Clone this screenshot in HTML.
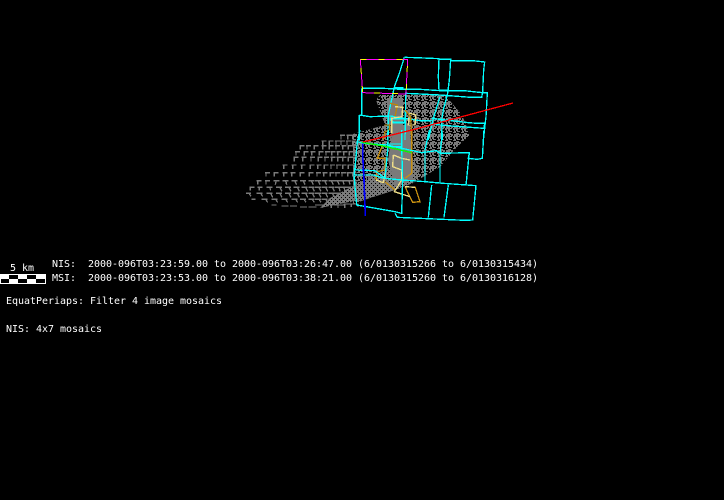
<!DOCTYPE html>
<html><head><meta charset="utf-8"><style>
html,body{margin:0;padding:0;background:#000;width:724px;height:500px;overflow:hidden}
svg{display:block}
text{font-family:"DejaVu Sans Mono","Liberation Mono",monospace;font-size:10px;fill:#fff;white-space:pre;letter-spacing:-.02px}
</style></head><body>
<svg width="724" height="500" viewBox="0 0 724 500" xmlns="http://www.w3.org/2000/svg">
<defs>
<pattern id="b" width="8" height="8" patternUnits="userSpaceOnUse">
<path d="M0 0h4v1h-2v2h2v1h-3v-1h-1zM5 0h3v1h-1v2h1v2h-3v-1h1v-2h-1zM0 5h3v1h2v2h-2v-1h-1v1h-2zM6 6h2v2h-2z" fill="#7a7a7a"/>
</pattern>
<pattern id="d" width="4" height="4" patternUnits="userSpaceOnUse">
<rect width="4" height="4" fill="#7a7a7a"/><rect x="1" y="1" width="1" height="1" fill="#000"/><rect x="3" y="3" width="1" height="1" fill="#000"/>
</pattern>
</defs>
<rect width="724" height="500" fill="#000"/>

<!-- mesh: fan marks -->
<g transform="translate(240 130) scale(.33333)" fill="none" stroke="#7a7a7a" stroke-width="4" shape-rendering="crispEdges">
<path d="M300 16h15m-12 0v12M320 16h15m-12 0v12M335 16h15m-12 0v12M245 33h15m-12 0v12M265 33h15m-12 0v12M285 33h15m-12 0v12M300 33h15m-12 0v12M318 33h15m-12 0v12M335 33h15m-12 0v12M178 47h15m-12 0v12M198 47h15m-12 0v12M220 47h15m-12 0v12M245 47h15m-12 0v12M265 47h15m-12 0v12M285 47h15m-12 0v12M305 47h15m-12 0v12M322 47h15m-12 0v12M338 47h15m-12 0v12M165 65h15m-12 0v12M190 65h15m-12 0v12M212 65h15m-12 0v12M235 65h15m-12 0v12M255 65h15m-12 0v12M272 65h15m-12 0v12M290 65h15m-12 0v12M308 65h15m-12 0v12M325 65h15m-12 0v12M340 65h15m-12 0v12M160 82h15m-12 0v12M185 82h15m-12 0v12M210 82h15m-12 0v12M232 82h15m-12 0v12M252 82h15m-12 0v12M272 82h15m-12 0v12M290 82h15m-12 0v12M305 82h15m-12 0v12M322 82h15m-12 0v12M338 82h15m-12 0v12M128 105h15m-12 0v12M155 105h15m-12 0v12M182 105h15m-12 0v12M208 105h15m-12 0v12M230 105h15m-12 0v12M250 105h15m-12 0v12M270 105h15m-12 0v12M288 105h15m-12 0v12M305 105h15m-12 0v12M322 105h15m-12 0v12M338 105h15m-12 0v12M75 128h15m-12 0v12M100 128h15m-12 0v12M128 128h15m-12 0v12M152 128h15m-12 0v12M178 128h15m-12 0v12M205 128h15m-12 0v12M228 128h15m-12 0v12M248 128h15m-12 0v12M268 128h15m-12 0v12M285 128h15m-12 0v12M303 128h15m-12 0v12M320 128h15m-12 0v12M335 128h15m-12 0v12"/>
<path d="M50 152h15m-12 0v12M75 152h15m-12 0v12M100 152h18m-9 0l-3 12M128 152h18m-9 0l3 12M155 152h18m-9 0l6 12M180 152h18m-9 0l6 12M205 152h18m-9 0l6 12M225 152h18m-9 0l6 12M245 152h18m-9 0l6 12M265 152h18m-9 0l6 12M283 152h18m-9 0l6 12M300 152h18m-9 0l3 12M318 152h18m-9 0l3 12M335 152h18m-9 0l3 12M28 172h15m-12 0v9M52 172h15m-9 0v9M80 172h18m-9 0l3 9M108 172h18m-6 0l6 12M135 172h18m-6 0l6 12M160 172h18m-6 0l6 12M185 172h18m-6 0l6 12M205 172h18m-6 0l6 12M225 172h18m-6 0l6 12M245 172h18m-6 0l6 12M265 172h18m-6 0l6 12M285 172h18m-6 0l3 12M300 172h18m-6 0l3 12M318 172h18m-6 0l3 12M335 172h18m-6 0l3 12M18 190h15m-6 0l6 9M50 190h18m-6 0l6 9M80 190h18m-6 0l6 12M108 190h18m-6 0l6 12M135 190h18m-6 0l6 12M160 190h18m-6 0l6 12M185 190h18m-6 0l6 12M205 190h18m-6 0l6 12M225 190h18m-6 0l6 12M245 190h18m-6 0l6 12M265 190h18m-6 0l6 12M283 190h18m-6 0l3 12M300 190h18m-6 0l3 12M318 190h18m-6 0l3 12M335 190h18m-6 0l3 12M35 208h12M65 208h18m-6 0l6 9M95 208h18m-6 0l6 9M125 208h18m-6 0l6 9M155 208h18m-6 0l6 9M180 208h18m-6 0l6 9M205 208h18m-6 0l6 9M225 208h18m-6 0l6 9M245 208h18m-6 0l6 9M265 208h18m-6 0l6 9M285 208h18m-6 0l3 9M300 208h18m-6 0l3 9M318 208h18m-6 0l3 9M335 208h18m-6 0l3 9M95 225h15M125 228h21M150 228h21M180 231h21M205 231h24M225 225h24v9M250 225h24v9M270 225h24v9M290 225h24v9M310 222h24v9M330 222h24v9"/>
</g>
<!-- mesh: dense part -->
<polygon points="353,134 385,125 376,100 380,95 445,95 462,115 470,135 457,147 440,167 423,177 413,183 395,190 373,197 353,204" fill="url(#b)"/>
<polygon points="320,208 373,197 395,190 413,183 420,170 413,160 385,170 355,185 330,198" fill="url(#d)"/>
<polygon points="393,125 410,125 413,180 395,186 388,160" fill="#7a7a7a"/>
<polygon points="387,98 403,98 403,125 387,125" fill="#7a7a7a"/>

<!-- lines from upper view -->
<g transform="translate(340 50) scale(.33333)" fill="none" stroke-width="4" shape-rendering="crispEdges">
<g stroke="#0ff">
<polyline points="193,22 228,23 297,26 295,80 297,122"/>
<polyline points="193,22 178,70 165,105 160,125 145,195 143,270"/>
<polyline points="297,28 332,28 328,90 323,130 310,180 305,210 307,270"/>
<polyline points="332,32 398,32 434,36 431,60 428,125 425,142 393,142 300,135 240,132 197,130 195,270"/>
<polyline points="65,115 130,115 185,118 240,118 300,122 325,122 372,122 428,128 442,128 438,200 430,270"/>
<polyline points="65,115 65,195"/>
<polyline points="58,195 90,200 150,198 240,212 275,212"/>
<polyline points="58,195 58,270"/>
<polyline points="275,205 385,218 412,220 434,220 432,235 335,228 300,225 270,222"/>
<polyline points="300,140 280,205 265,270"/>
<polyline points="297,120 322,120"/>
<polyline points="160,113 190,113"/>
<polyline points="150,205 195,205 195,218 160,218 150,205" stroke-width="6"/>
</g>
<polygon points="61,28 203,28 198,132 68,128" stroke="#f0f" stroke-width="3"/>
<polygon points="61,28 203,28 198,132 68,128" stroke="#ff0" stroke-width="3" stroke-dasharray="18 36"/>
<polyline points="133,225 150,225 148,240 135,245 130,270" stroke="#b8860b"/>
<polyline points="150,160 172,165 165,200" stroke="#b8860b"/>
<polyline points="165,170 188,172 186,200 155,205 155,250" stroke="#eedd88"/>
<polyline points="208,190 228,195 225,225 205,225 208,190" stroke="#eedd88"/>
<polyline points="195,180 212,200 215,270" stroke="#b8860b"/>
</g>

<!-- lines from lower view -->
<g transform="translate(340 130) scale(.33333)" fill="none" stroke-width="4" shape-rendering="crispEdges">
<g stroke="#c89010">
<polyline points="110,85 135,85 135,120 110,125 108,150"/>
<polyline points="215,0 215,130 195,145"/>
<polyline points="130,40 112,85"/>
<polyline points="135,155 165,180"/>
<polyline points="195,170 218,217 240,215 225,170"/>
</g>
<g stroke="#eedd88">
<polyline points="108,150 130,158 135,130"/>
<polyline points="160,75 185,85 210,90"/>
<polyline points="160,75 158,110 185,120 185,150 163,185 210,200"/>
<polyline points="195,170 225,172"/>
</g>
<g stroke="#0ff">
<polyline points="60,0 52,35 45,115 42,135 50,225 165,245 185,250 188,150 185,50 185,0"/>
<polyline points="52,35 70,40 140,45 245,68 290,62 300,70 388,68 385,85 412,88 427,85 432,0"/>
<polyline points="42,115 50,120 105,122 135,145 185,150 255,155 310,160 408,167 398,270 375,271 172,262 165,250"/>
<polyline points="42,135 100,135 130,145"/>
<polyline points="275,165 265,262"/>
<polyline points="325,165 312,262"/>
<polyline points="268,0 255,60 255,155"/>
<polyline points="305,0 305,30 300,70 300,160"/>
<polyline points="388,68 378,165"/>
<polyline points="145,0 143,60 135,145"/>
<polyline points="140,42 185,42 185,50 140,50"/>
</g>
<polyline points="68,40 68,75 72,150 75,230 76,258" stroke="#00f" stroke-width="5"/>
<polyline points="65,37 130,48 215,68" stroke="#0f0"/>
</g>
<polyline points="363,142 412,130 513,103" fill="none" stroke="#f00" stroke-width="1.3" shape-rendering="crispEdges"/>

<!-- scale bar -->
<rect x="0" y="274" width="46" height="10" fill="#000"/>
<path d="M0 274h9v5h-9zM18 274h9v5h-9zM36 274h10v5h-10zM9 279h9v5h-9zM27 279h9v5h-9z" fill="#fff"/>
<rect x="0.5" y="274.5" width="45" height="9" fill="none" stroke="#fff" stroke-width="1"/>

<text x="10" y="271">5 km</text>
<text x="52" y="267">NIS:  2000-096T03:23:59.00 to 2000-096T03:26:47.00 (6/0130315266 to 6/0130315434)</text>
<text x="52" y="281">MSI:  2000-096T03:23:53.00 to 2000-096T03:38:21.00 (6/0130315260 to 6/0130316128)</text>
<text x="6" y="304">EquatPeriaps: Filter 4 image mosaics</text>
<text x="6" y="332">NIS: 4x7 mosaics</text>
</svg>
</body></html>
